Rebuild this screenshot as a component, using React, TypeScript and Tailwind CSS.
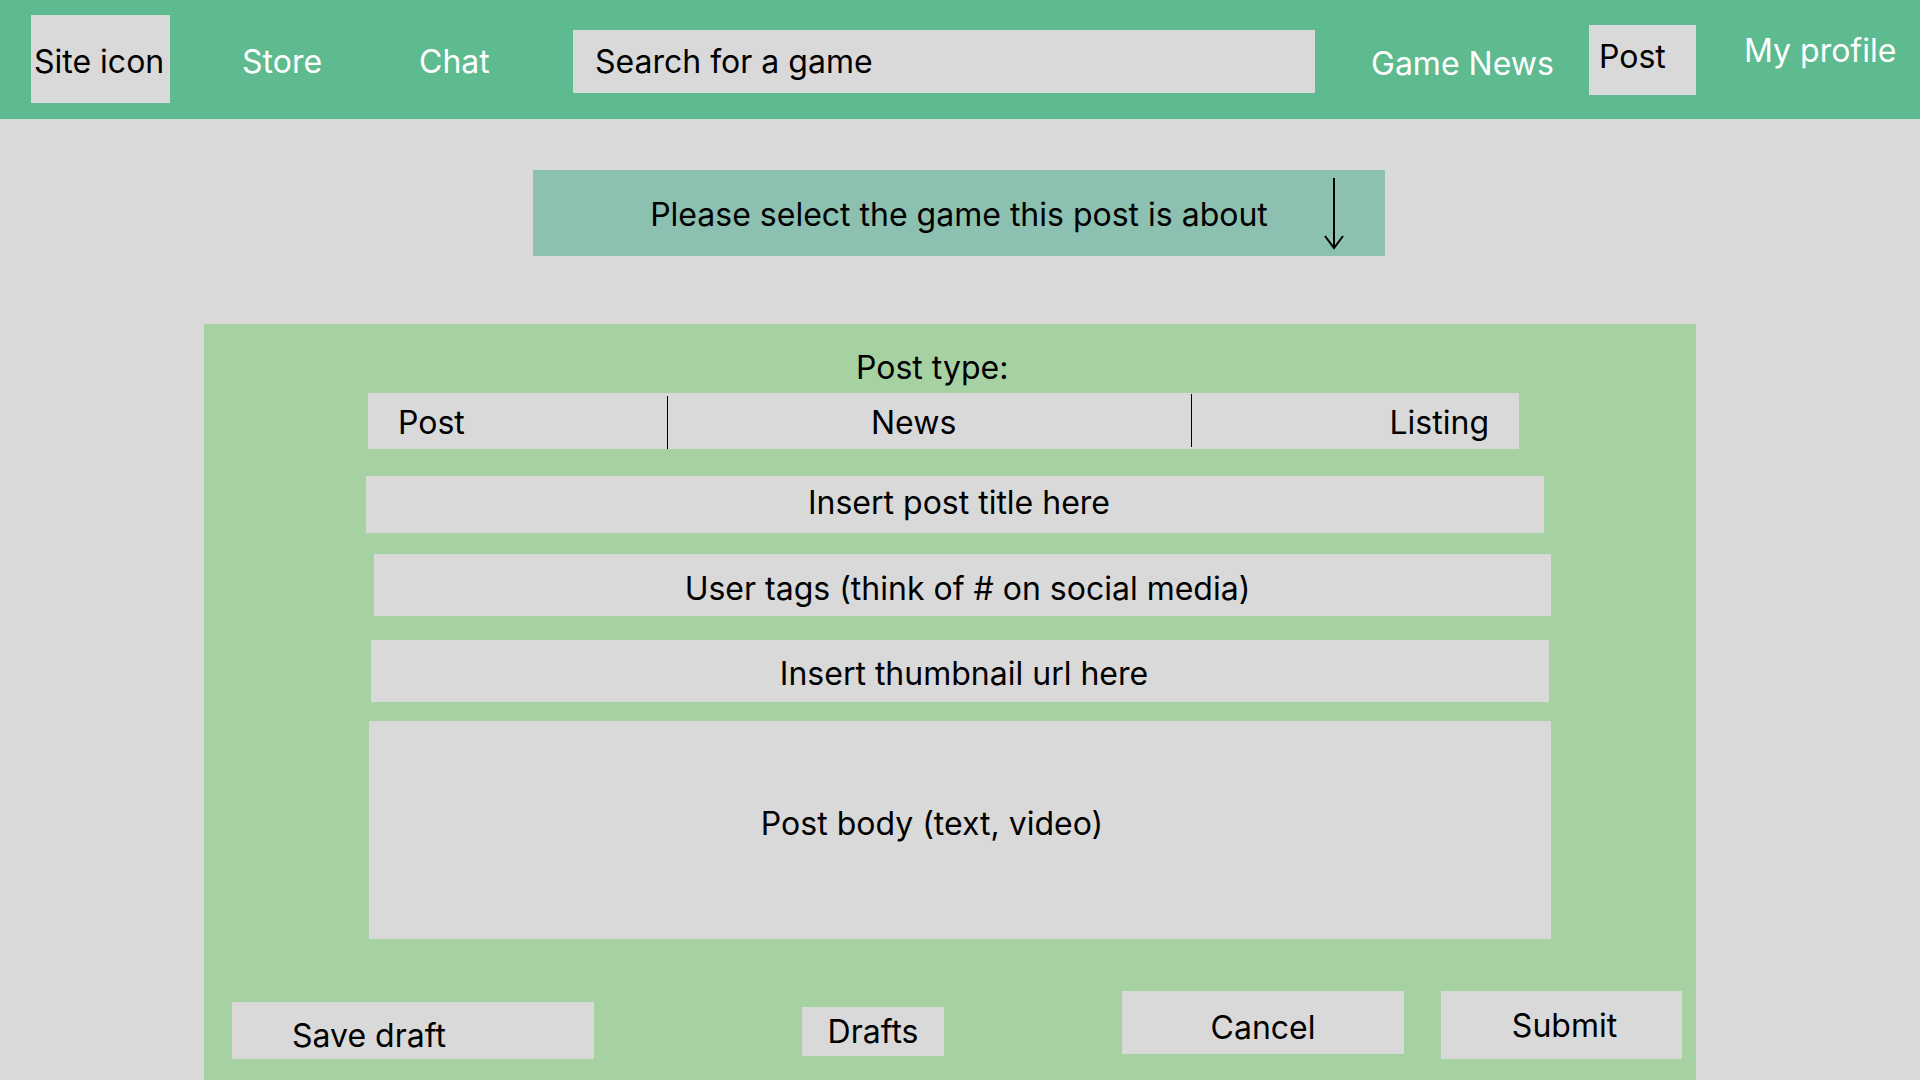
import React from "react";

function DownArrow() {
  return (
    <svg width="24" height="72" viewBox="0 0 24 72" fill="none">
      <line x1="12" y1="0" x2="12" y2="70" stroke="#000" strokeWidth="2" />
      <path d="M3 58 L12 70 L21 58" stroke="#000" strokeWidth="2" fill="none" />
    </svg>
  );
}

export default function App() {
  return (
    <div
      className="w-[1920px] h-[1080px] overflow-hidden bg-[#d9d9d9] text-black text-[32px] leading-[39px]"
      style={{ fontFamily: "Inter, 'Noto Sans', sans-serif" }}
    >
      {/* Header */}
      <div className="h-[119px] bg-[#5eba8f] flex items-start">
        <div className="ml-[31px] mt-[15px] w-[139px] h-[88px] bg-[#d9d9d9] flex items-center pl-[3px] pt-[4px]">
          Site icon
        </div>
        <div className="ml-[72px] mt-[42px] w-[177px] text-white">Store</div>
        <div className="mt-[42px] w-[154px] text-white">Chat</div>
        <div className="mt-[30px] w-[742px] h-[63px] bg-[#d9d9d9] flex items-center pl-[22px]">
          Search for a game
        </div>
        <div className="ml-[56px] mt-[44px] w-[218px] text-white">Game News</div>
        <div className="mt-[25px] w-[107px] h-[70px] bg-[#d9d9d9] flex items-center pl-[10px] pb-[8px]">
          Post
        </div>
        <div className="ml-[48px] mt-[31px] text-white">My profile</div>
      </div>

      {/* Game select dropdown */}
      <div className="ml-[533px] mt-[51px] w-[852px] h-[86px] bg-[#8cc0b0] relative flex items-center justify-center pt-[2px]">
        <span>Please select the game this post is about</span>
        <div className="absolute right-[39px] top-[8px]">
          <DownArrow />
        </div>
      </div>

      {/* Form panel */}
      <div className="ml-[204px] mt-[68px] w-[1492px] h-[756px] bg-[#a6d1a3] flex flex-col items-start">
        <div className="ml-[652px] mt-[24px]">Post type:</div>

        <div className="ml-[164px] mt-[6px] w-[1151px] h-[56px] bg-[#d9d9d9] flex items-stretch">
          <div className="w-[299px] flex items-center pl-[30px] pt-[2px]">Post</div>
          <div className="w-px bg-black mt-[3px]" />
          <div className="w-[523px] flex items-center pl-[203px] pt-[2px]">News</div>
          <div className="w-px bg-black mt-[1px] mb-[2px]" />
          <div className="flex-1 flex items-center justify-end pr-[30px] pt-[2px]">Listing</div>
        </div>

        <div className="ml-[162px] mt-[27px] w-[1178px] h-[57px] bg-[#d9d9d9] flex items-center justify-center pl-[8px] pb-[4px]">
          Insert post title here
        </div>

        <div className="ml-[170px] mt-[21px] w-[1177px] h-[62px] bg-[#d9d9d9] flex items-center justify-center pl-[10px] pt-[6px]">
          User tags (think of # on social media)
        </div>

        <div className="ml-[167px] mt-[24px] w-[1178px] h-[62px] bg-[#d9d9d9] flex items-center justify-center pl-[8px] pt-[4px]">
          Insert thumbnail url here
        </div>

        <div className="ml-[165px] mt-[19px] w-[1182px] h-[218px] bg-[#d9d9d9] flex items-center justify-center pr-[56px] pb-[14px]">
          Post body (text, video)
        </div>

        <div className="mt-[52px] flex items-start">
          <div className="ml-[28px] mt-[11px] w-[362px] h-[57px] bg-[#d9d9d9] flex items-center pl-[60px] pt-[10px]">
            Save draft
          </div>
          <div className="ml-[208px] mt-[16px] w-[142px] h-[49px] bg-[#d9d9d9] flex items-center justify-center">
            Drafts
          </div>
          <div className="ml-[178px] w-[282px] h-[63px] bg-[#d9d9d9] flex items-center justify-center pt-[10px]">
            Cancel
          </div>
          <div className="ml-[37px] w-[241px] h-[68px] bg-[#d9d9d9] flex items-center justify-center pl-[6px]">
            Submit
          </div>
        </div>
      </div>
    </div>
  );
}
